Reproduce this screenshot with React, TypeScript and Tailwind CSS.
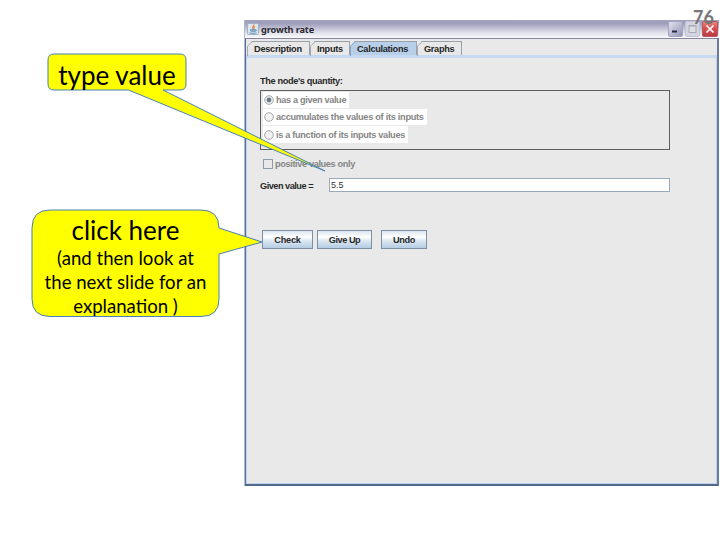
import React from "react";

const ui = "font-['Liberation_Sans',sans-serif] font-bold whitespace-nowrap";

function Tab({ label, width, active, tracking }: { label: string; width: string; active?: boolean; tracking: string }) {
  return (
    <div className={`relative h-full ${width}`}>
      <div
        className={`flex h-full items-start border-t border-r border-[#9aa0aa] pl-[7px] pt-px ${active ? "bg-[#b8cfe9]" : "bg-[#e8e8e8]"} [clip-path:polygon(5px_0,100%_0,100%_100%,0_100%,0_5px)]`}
      >
        <span className={`text-[9.2px] leading-[12px] text-[#262626] ${ui} ${tracking}`}>{label}</span>
      </div>
      <svg className="absolute left-0 top-0 h-[15px] w-[6px]" viewBox="0 0 6 15" aria-hidden="true">
        <path d="M.5 15V5.2L5.3.5" fill="none" stroke={active ? "#86a3ce" : "#a3a9b1"} />
      </svg>
    </div>
  );
}

function Radio({ label, width, height, checked, tracking }: { label: string; width: string; height: string; checked?: boolean; tracking: string }) {
  return (
    <div className={`flex items-center bg-white pl-px ${width} ${height}`}>
      <svg className="h-[10px] w-[10px] shrink-0" viewBox="0 0 10 10" aria-hidden="true">
        <circle cx="5" cy="5" r="4.3" fill="#f2f2f2" stroke="#a1a6ab" strokeWidth="1" />
        {checked && <circle cx="5" cy="5" r="2.4" fill="#697a8b" />}
      </svg>
      <span className={`ml-[2px] text-[9.2px] leading-[12px] text-[#868686] ${ui} ${tracking}`}>{label}</span>
    </div>
  );
}

function Button({ label, width, tracking }: { label: string; width: string; tracking: string }) {
  return (
    <button
      className={`flex h-[19px] items-center justify-center border border-[#7e8fa3] bg-[linear-gradient(#dbe6f1,#ffffff_35%,#dce7f2_58%,#b4cce3)] pt-px text-[9.2px] leading-[12px] text-[#292929] ${ui} ${width} ${tracking}`}
    >
      {label}
    </button>
  );
}

function JavaIcon() {
  return (
    <svg className="h-[12px] w-[12px]" viewBox="0 0 12 12" aria-hidden="true">
      <rect x=".5" y=".5" width="11" height="11" rx="1" fill="#d9e6f0" stroke="#9fb3c6" />
      <path d="M6.8 1.5C7.3 3 4.8 3.5 5.7 5.8M8 3.3C6.5 4 6.8 4.8 7 5.8" fill="none" stroke="#e58a48" strokeWidth="1.3" />
      <path d="M3.5 6.5h4.7v1.4c0 1-4.7 1-4.7 0zM8.3 6.8c2 0 1.4 1.5-.2 1.5M2.3 9.8c2 .8 5.5.8 7.5 0" fill="#8fb0cb" stroke="#6b93b6" strokeWidth=".8" />
    </svg>
  );
}

function WindowControls() {
  return (
    <div className="flex gap-[2px]">
      <svg className="h-[16px] w-[15px]" viewBox="0 0 15 16" aria-hidden="true">
        <defs>
          <linearGradient id="min" x1="0" y1="0" x2="1" y2="1">
            <stop stopColor="#e6e6f1" />
            <stop offset="1" stopColor="#9092b4" />
          </linearGradient>
        </defs>
        <rect x=".5" y=".5" width="14" height="15" rx="1.5" fill="url(#min)" stroke="#a3a4bd" />
        <path d="M4 10.5h5" stroke="#292a45" strokeWidth="2" />
      </svg>
      <svg className="h-[16px] w-[15px]" viewBox="0 0 15 16" aria-hidden="true">
        <rect x=".5" y=".5" width="14" height="15" rx="1.5" fill="#d5d5e1" stroke="#c2c2d3" />
        <rect x="4" y="5" width="7" height="6.5" fill="#dedee5" stroke="#a9a9b7" />
        <path d="M3.5 4.7h8" stroke="#a9a9b7" />
      </svg>
      <svg className="h-[16px] w-[16px]" viewBox="0 0 16 16" aria-hidden="true">
        <defs>
          <linearGradient id="close" x1="0" y1="0" x2="0" y2="1">
            <stop stopColor="#e58b80" />
            <stop offset=".45" stopColor="#d94f50" />
            <stop offset="1" stopColor="#b83a45" />
          </linearGradient>
        </defs>
        <rect x=".5" y=".5" width="15" height="15" rx="1.5" fill="url(#close)" stroke="#bc5660" />
        <path d="M4.5 4.5l7 7M11.5 4.5l-7 7" stroke="#fff" strokeWidth="1.7" />
      </svg>
    </div>
  );
}

function GrowthRateWindow() {
  return (
    <div className="absolute left-[244px] top-[20px] flex h-[466px] w-[475px] flex-col border-l border-[#b7b8c9] bg-[#e9e9e9]">
      <div className="flex h-[18px] shrink-0 items-center justify-between bg-[linear-gradient(#a5a3bf,#9d9cba_18%,#b7b6cc_38%,#dcdce8_66%,#fafafd)] pl-[2px] pr-px">
        <div className="flex items-center gap-[2px]">
          <JavaIcon />
          <span className="mt-[2px] font-['Noto_Sans',sans-serif] text-[9.2px] font-bold leading-[14px] tracking-[-0.12px] whitespace-nowrap text-[#2b2931]">growth rate</span>
        </div>
        <WindowControls />
      </div>
      <div className="flex grow flex-col border-t border-r-2 border-b-2 border-l border-t-[#85859f] border-r-[#6b7b9e] border-b-[#53688b] border-l-[#536fa9]">
        <div className="flex h-[16px] shrink-0 pl-px pt-[2px]">
          <Tab label="Description" width="w-[63px]" tracking="tracking-[-0.25px]" />
          <Tab label="Inputs" width="w-[40px]" tracking="tracking-[-0.3px]" />
          <Tab label="Calculations" width="w-[67px]" tracking="tracking-[-0.3px]" active />
          <Tab label="Graphs" width="w-[45px]" tracking="tracking-[-0.3px]" />
        </div>
        <div className="flex grow flex-col border border-t-[3px] border-[#bcd3ee] border-t-[#c5d9f0] pl-[13px] pr-[45px]">
          <p className={`mt-[17px] text-[9.2px] leading-[12px] text-[#292929] ${ui} tracking-[-0.35px]`}>The node&apos;s quantity:</p>
          <div className="mt-[3px] flex h-[60px] w-[410px] flex-col gap-px border border-[#5e5e5e] pl-[2px] pt-px">
            <Radio label="has a given value" width="w-[86px]" height="h-[16px]" tracking="tracking-[-0.35px]" checked />
            <Radio label="accumulates the values of its inputs" width="w-[164px]" height="h-[16px]" tracking="tracking-[-0.28px]" />
            <Radio label="is a function of its inputs values" width="w-[145px]" height="h-[17px]" tracking="tracking-[-0.32px]" />
          </div>
          <div className={`mt-[8px] flex h-[12px] items-center gap-[2px] pl-[3px] text-[9.2px] leading-[12px] text-[#868686] ${ui} tracking-[-0.37px]`}>
            <span className="h-[10px] w-[10px] border border-[#8d9bad]" />
            positive values only
          </div>
          <div className="mt-[8px] flex h-[14px] items-center">
            <span className={`w-[69px] pt-[2px] text-[9.2px] leading-[12px] text-[#292929] ${ui} tracking-[-0.5px]`}>Given value =</span>
            <div className="flex h-[14px] w-[341px] items-center border border-[#9aaabd] bg-white pl-px pt-px font-['Liberation_Sans',sans-serif] text-[9px] leading-[11px] text-[#333]">5.5</div>
          </div>
          <div className="ml-[2px] mt-[38px] flex">
            <Button label="Check" width="w-[51px]" tracking="tracking-[-0.2px]" />
            <div className="ml-[4px]"><Button label="Give Up" width="w-[55px]" tracking="tracking-[-0.45px]" /></div>
            <div className="ml-[9px]"><Button label="Undo" width="w-[46px]" tracking="tracking-[-0.4px]" /></div>
          </div>
        </div>
      </div>
    </div>
  );
}

export default function App() {
  return (
    <main className="relative h-[540px] w-[720px] overflow-hidden bg-white">
      <GrowthRateWindow />
      <svg className="absolute inset-0 h-[540px] w-[720px]" viewBox="0 0 720 540" aria-hidden="true">
        <g fill="#ffff00" stroke="#4780b8" strokeWidth="1">
          <path d="M54 54H180Q186 54 186 60V84Q186 90 180 90H163L325 171L128.5 90H54Q48 90 48 84V60Q48 54 54 54Z" />
          <path d="M50 210H201Q219 210 219 228L262 242L219 254V299Q219 316.5 201 316.5H50Q32 316.5 32 299V228Q32 210 50 210Z" />
        </g>
      </svg>
      <p className="absolute left-[48px] top-[59px] w-[138px] text-center font-['Lato',sans-serif] text-[26px] leading-[32px] whitespace-nowrap text-black">type value</p>
      <div className="absolute left-[32px] top-[215px] flex w-[187px] flex-col items-center font-['Lato',sans-serif] whitespace-nowrap text-black">
        <p className="text-[26px] leading-[31px]">click here</p>
        <div className="text-center text-[18.6px] leading-[24px]">
          <p>(and then look at</p>
          <p>the next slide for an</p>
          <p>explanation )</p>
        </div>
      </div>
      <span className="absolute left-[693px] top-[6px] font-['Lato',sans-serif] text-[18px] font-bold leading-[22px] text-[#777]">76</span>
    </main>
  );
}
